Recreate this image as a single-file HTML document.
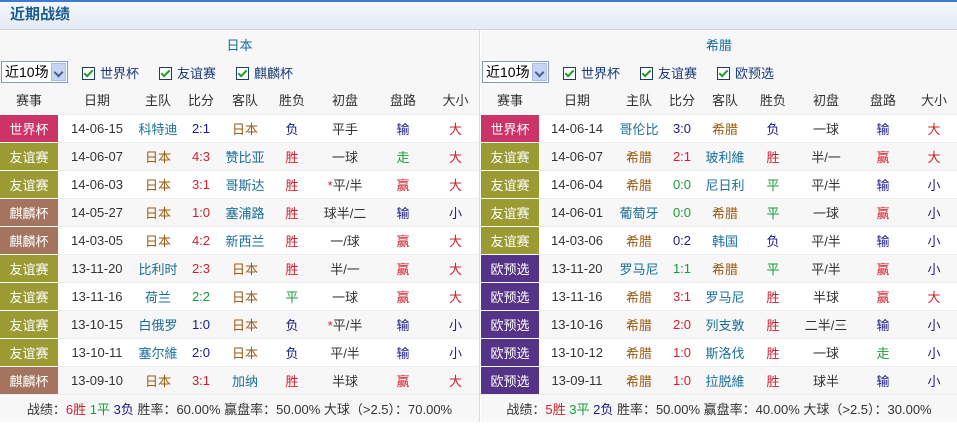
<!DOCTYPE html>
<html><head><meta charset="utf-8"><style>
*{margin:0;padding:0;box-sizing:border-box}
body{width:957px;height:426px;overflow:hidden;background:#fff;font-family:"Liberation Sans","Noto Sans CJK SC",sans-serif;font-size:13px;color:#333;position:relative}
#top{position:absolute;left:0;top:0;width:957px;height:2px;background:#3a7bd5}
#hd{position:absolute;left:0;top:2px;width:957px;height:28px;background:linear-gradient(#f3f7fc,#e4ebf4);border-bottom:1px solid #c9d6e6;font-weight:bold;font-size:15px;color:#1a5a8c;line-height:26px;padding-left:10px}
.tb{position:absolute;top:30px}
table{border-collapse:collapse;table-layout:fixed}
td{text-align:center;height:28px;padding:0;white-space:nowrap;overflow:hidden;font-size:13px}
.team td{height:28px;color:#1a6a9a;background:#f7f7f7}
.flt td{height:28px;text-align:left;background:#f7f7f7}
.hr td{height:28px;background:#f7f7f7;color:#333}
tr.r td{border-top:1px solid #eee}
tr.r:nth-child(odd) td{background:#f7f7f7}
td.lg{color:#fff;border-top:1px solid #fff !important}
.wc{background:#cc3366 !important}.fr{background:#9c9a33 !important}.kr{background:#a4745e !important}.eu{background:#553388 !important}
.t{color:#1a6e9a}.m{color:#9a5a10}
.w{color:#d02030}.l{color:#1a1a8a}.d{color:#1a9a3a}
.sc{font-size:13px}
.sel{display:inline-block;width:67px;height:22px;border:1px solid #7f9db9;background:#fff;vertical-align:middle;position:relative;font-size:14px;line-height:20px;padding-left:3px;color:#000;margin-left:1px}
.sel i{position:absolute;right:1px;top:1px;width:15px;height:18px;background:#c6d6f2;border:1px solid #a9bde0}
.sel i:after{content:"";position:absolute;left:3px;top:5px;width:5px;height:5px;border-right:2px solid #4a5f9a;border-bottom:2px solid #4a5f9a;transform:rotate(45deg)}
.cb{display:inline-block;vertical-align:middle;margin-left:14px;color:#1a3c7a;font-size:13px}
.cb b{display:inline-block;width:13px;height:13px;border:1px solid #1c3d6a;background:#fff;vertical-align:-2px;margin-right:5px;position:relative}
.cb b:after{content:"";position:absolute;left:3px;top:0px;width:3px;height:7px;border-right:2px solid #2a9a2a;border-bottom:2px solid #2a9a2a;transform:rotate(45deg)}
.ft td{height:28px;background:#f7f7f7;border-top:1px solid #eee;color:#333;font-size:13px}
</style></head><body>
<div id="top"></div>
<div id="hd">近期战绩</div>

<div class="tb" style="left:0;width:480px;border-right:1px solid #d6dde6">
<table style="width:479px">
<colgroup><col style="width:58px"><col style="width:78px"><col style="width:44px"><col style="width:42px"><col style="width:46px"><col style="width:48px"><col style="width:58px"><col style="width:58px"><col style="width:47px"></colgroup>
<tr class="team"><td colspan="9">日本</td></tr>
<tr class="flt"><td colspan="9"><span class="sel">近10场<i></i></span><span class="cb" style="margin-left:14px"><b></b>世界杯</span><span class="cb" style="margin-left:20px"><b></b>友谊赛</span><span class="cb" style="margin-left:20px"><b></b>麒麟杯</span></td></tr>
<tr class="hr"><td>赛事</td><td>日期</td><td>主队</td><td>比分</td><td>客队</td><td>胜负</td><td>初盘</td><td>盘路</td><td>大小</td></tr>
<tr class="r"><td class="lg wc">世界杯</td><td>14-06-15</td><td class="t">科特迪</td><td class="sc l">2:1</td><td class="m">日本</td><td class="l">负</td><td>平手</td><td class="l">输</td><td class="w">大</td></tr>
<tr class="r"><td class="lg fr">友谊赛</td><td>14-06-07</td><td class="m">日本</td><td class="sc w">4:3</td><td class="t">赞比亚</td><td class="w">胜</td><td>一球</td><td class="d">走</td><td class="w">大</td></tr>
<tr class="r"><td class="lg fr">友谊赛</td><td>14-06-03</td><td class="m">日本</td><td class="sc w">3:1</td><td class="t">哥斯达</td><td class="w">胜</td><td><span class="w">*</span>平/半</td><td class="w">赢</td><td class="w">大</td></tr>
<tr class="r"><td class="lg kr">麒麟杯</td><td>14-05-27</td><td class="m">日本</td><td class="sc w">1:0</td><td class="t">塞浦路</td><td class="w">胜</td><td>球半/二</td><td class="l">输</td><td class="l">小</td></tr>
<tr class="r"><td class="lg kr">麒麟杯</td><td>14-03-05</td><td class="m">日本</td><td class="sc w">4:2</td><td class="t">新西兰</td><td class="w">胜</td><td>一/球</td><td class="w">赢</td><td class="w">大</td></tr>
<tr class="r"><td class="lg fr">友谊赛</td><td>13-11-20</td><td class="t">比利时</td><td class="sc w">2:3</td><td class="m">日本</td><td class="w">胜</td><td>半/一</td><td class="w">赢</td><td class="w">大</td></tr>
<tr class="r"><td class="lg fr">友谊赛</td><td>13-11-16</td><td class="t">荷兰</td><td class="sc d">2:2</td><td class="m">日本</td><td class="d">平</td><td>一球</td><td class="w">赢</td><td class="w">大</td></tr>
<tr class="r"><td class="lg fr">友谊赛</td><td>13-10-15</td><td class="t">白俄罗</td><td class="sc l">1:0</td><td class="m">日本</td><td class="l">负</td><td><span class="w">*</span>平/半</td><td class="l">输</td><td class="l">小</td></tr>
<tr class="r"><td class="lg fr">友谊赛</td><td>13-10-11</td><td class="t">塞尔維</td><td class="sc l">2:0</td><td class="m">日本</td><td class="l">负</td><td>平/半</td><td class="l">输</td><td class="l">小</td></tr>
<tr class="r"><td class="lg kr">麒麟杯</td><td>13-09-10</td><td class="m">日本</td><td class="sc w">3:1</td><td class="t">加纳</td><td class="w">胜</td><td>半球</td><td class="w">赢</td><td class="w">大</td></tr>
<tr class="ft"><td colspan="9">战绩：<span class="w">6胜</span> <span class="d">1平</span> <span class="l">3负</span> 胜率：60.00% 赢盘率：50.00% 大球（&gt;2.5）：70.00%</td></tr>
</table></div>

<div class="tb" style="left:481px;width:476px">
<table style="width:476px">
<colgroup><col style="width:58px"><col style="width:76px"><col style="width:48px"><col style="width:38px"><col style="width:48px"><col style="width:48px"><col style="width:58px"><col style="width:56px"><col style="width:46px"></colgroup>
<tr class="team"><td colspan="9">希腊</td></tr>
<tr class="flt"><td colspan="9"><span class="sel">近10场<i></i></span><span class="cb" style="margin-left:14px"><b></b>世界杯</span><span class="cb" style="margin-left:20px"><b></b>友谊赛</span><span class="cb" style="margin-left:20px"><b></b>欧预选</span></td></tr>
<tr class="hr"><td>赛事</td><td>日期</td><td>主队</td><td>比分</td><td>客队</td><td>胜负</td><td>初盘</td><td>盘路</td><td>大小</td></tr>
<tr class="r"><td class="lg wc">世界杯</td><td>14-06-14</td><td class="t">哥伦比</td><td class="sc l">3:0</td><td class="m">希腊</td><td class="l">负</td><td>一球</td><td class="l">输</td><td class="w">大</td></tr>
<tr class="r"><td class="lg fr">友谊赛</td><td>14-06-07</td><td class="m">希腊</td><td class="sc w">2:1</td><td class="t">玻利維</td><td class="w">胜</td><td>半/一</td><td class="w">赢</td><td class="w">大</td></tr>
<tr class="r"><td class="lg fr">友谊赛</td><td>14-06-04</td><td class="m">希腊</td><td class="sc d">0:0</td><td class="t">尼日利</td><td class="d">平</td><td>平/半</td><td class="l">输</td><td class="l">小</td></tr>
<tr class="r"><td class="lg fr">友谊赛</td><td>14-06-01</td><td class="t">葡萄牙</td><td class="sc d">0:0</td><td class="m">希腊</td><td class="d">平</td><td>一球</td><td class="w">赢</td><td class="l">小</td></tr>
<tr class="r"><td class="lg fr">友谊赛</td><td>14-03-06</td><td class="m">希腊</td><td class="sc l">0:2</td><td class="t">韩国</td><td class="l">负</td><td>平/半</td><td class="l">输</td><td class="l">小</td></tr>
<tr class="r"><td class="lg eu">欧预选</td><td>13-11-20</td><td class="t">罗马尼</td><td class="sc d">1:1</td><td class="m">希腊</td><td class="d">平</td><td>平/半</td><td class="w">赢</td><td class="l">小</td></tr>
<tr class="r"><td class="lg eu">欧预选</td><td>13-11-16</td><td class="m">希腊</td><td class="sc w">3:1</td><td class="t">罗马尼</td><td class="w">胜</td><td>半球</td><td class="w">赢</td><td class="w">大</td></tr>
<tr class="r"><td class="lg eu">欧预选</td><td>13-10-16</td><td class="m">希腊</td><td class="sc w">2:0</td><td class="t">列支敦</td><td class="w">胜</td><td>二半/三</td><td class="l">输</td><td class="l">小</td></tr>
<tr class="r"><td class="lg eu">欧预选</td><td>13-10-12</td><td class="m">希腊</td><td class="sc w">1:0</td><td class="t">斯洛伐</td><td class="w">胜</td><td>一球</td><td class="d">走</td><td class="l">小</td></tr>
<tr class="r"><td class="lg eu">欧预选</td><td>13-09-11</td><td class="m">希腊</td><td class="sc w">1:0</td><td class="t">拉脱維</td><td class="w">胜</td><td>球半</td><td class="l">输</td><td class="l">小</td></tr>
<tr class="ft"><td colspan="9">战绩：<span class="w">5胜</span> <span class="d">3平</span> <span class="l">2负</span> 胜率：50.00% 赢盘率：40.00% 大球（&gt;2.5）：30.00%</td></tr>
</table></div>
</body></html>
